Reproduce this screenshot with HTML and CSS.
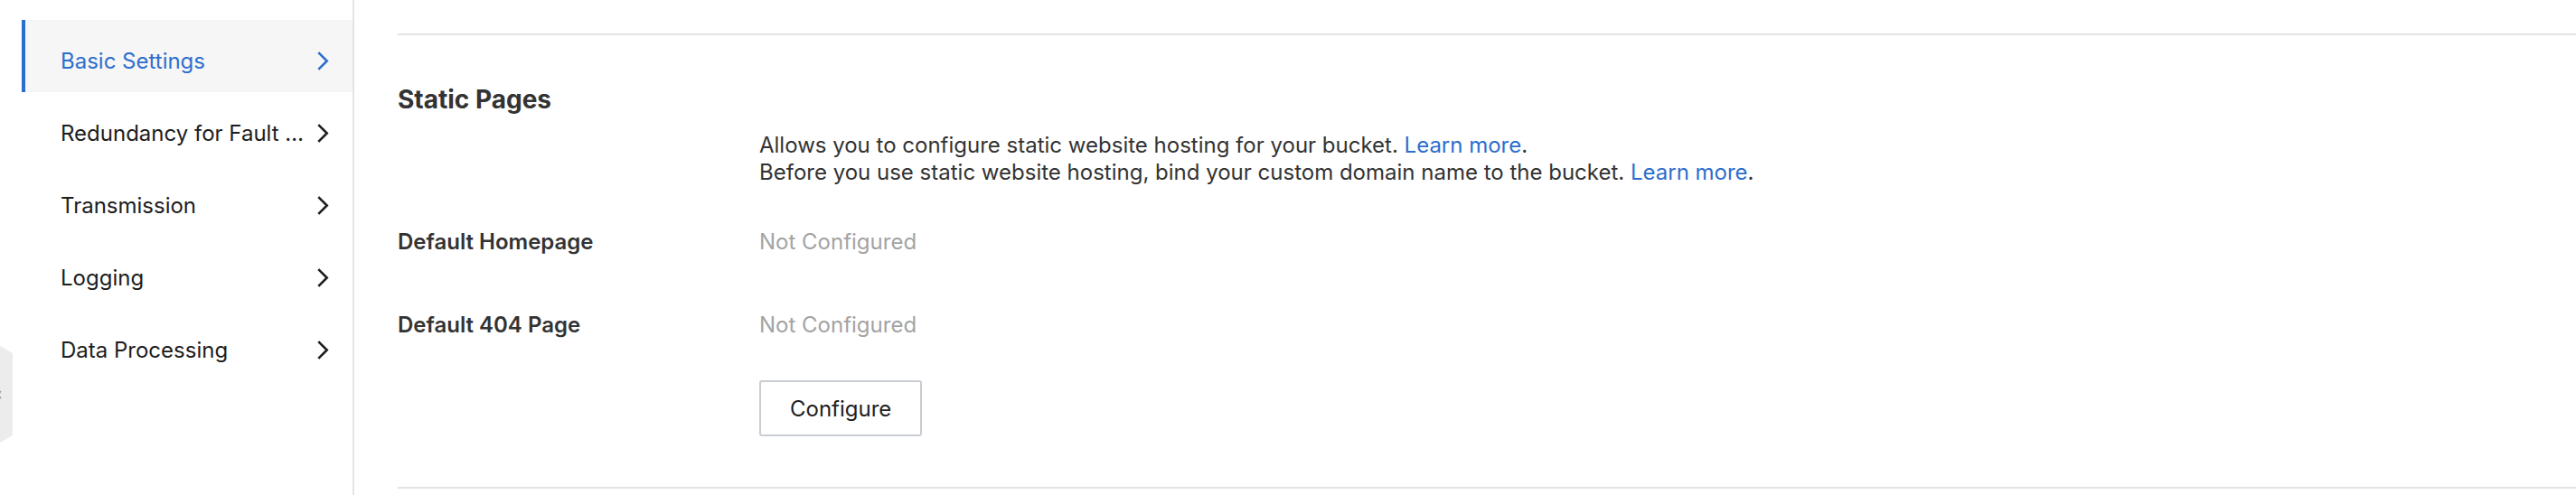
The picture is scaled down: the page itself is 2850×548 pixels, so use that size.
FILE: index.html
```html
<!DOCTYPE html>
<html lang="en">
<head>
    <meta charset="UTF-8">
    <meta name="viewport" content="width=device-width, initial-scale=1.0">
    <title>Static Pages</title>
    <link rel="stylesheet" href="styles.css">
</head>
<body>
    <div class="layout">
        <nav class="side-menu">
            <a class="menu-item active" href="#">
                <span class="menu-text">Basic Settings</span>
                <svg class="chevron" viewBox="0 0 13 22"><polyline points="2,2 11,11 2,20"/></svg>
            </a>
            <a class="menu-item" href="#">
                <span class="menu-text" title="Redundancy for Fault Tolerance">Redundancy for Fault Tolerance</span>
                <svg class="chevron" viewBox="0 0 13 22"><polyline points="2,2 11,11 2,20"/></svg>
            </a>
            <a class="menu-item" href="#">
                <span class="menu-text">Transmission</span>
                <svg class="chevron" viewBox="0 0 13 22"><polyline points="2,2 11,11 2,20"/></svg>
            </a>
            <a class="menu-item" href="#">
                <span class="menu-text">Logging</span>
                <svg class="chevron" viewBox="0 0 13 22"><polyline points="2,2 11,11 2,20"/></svg>
            </a>
            <a class="menu-item" href="#">
                <span class="menu-text">Data Processing</span>
                <svg class="chevron" viewBox="0 0 13 22"><polyline points="2,2 11,11 2,20"/></svg>
            </a>
        </nav>

        <main class="content">
            <section class="panel">
                <h2>Static Pages</h2>

                <div class="row desc-row">
                    <div class="row-label"></div>
                    <div class="row-value desc">
                        <p>Allows you to configure static website hosting for your bucket. <a href="#">Learn more</a>.</p>
                        <p>Before you use static website hosting, bind your custom domain name to the bucket. <a href="#">Learn more</a>.</p>
                    </div>
                </div>

                <div class="row field-row">
                    <div class="row-label">Default Homepage</div>
                    <div class="row-value muted">Not Configured</div>
                </div>

                <div class="row field-row">
                    <div class="row-label">Default 404 Page</div>
                    <div class="row-value muted">Not Configured</div>
                </div>

                <div class="row button-row">
                    <div class="row-label"></div>
                    <div class="row-value">
                        <button type="button" class="btn">Configure</button>
                    </div>
                </div>
            </section>
        </main>
    </div>

    <!-- ручка сворачивания меню -->
    <div class="collapse-handle">
        <svg viewBox="0 0 6 10"><polyline points="4,1 1,5 4,9"/></svg>
    </div>
</body>
</html>
```

FILE: styles.css
```css
body {
    margin: 0;
    font-family: Inter, "Liberation Sans", Arial, sans-serif;
    color: #333;
    background: #fff;
}

.layout {
    display: flex;
    min-height: 100vh;
}

/* Боковое меню */
.side-menu {
    width: 390px;
    flex-shrink: 0;
    padding-top: 22px;
    border-right: 2px solid #e4e4e4;
}

.menu-item {
    display: flex;
    align-items: center;
    gap: 4px;
    height: 80px;
    box-sizing: border-box;
    margin-left: 24px;
    padding: 10px 26px 0 39px;
    border-left: 4px solid transparent;
    font-size: 24px;
    color: #1d1d1d;
    text-decoration: none;
}

.menu-item.active {
    border-left-color: #2d6ecd;
    background-color: #f6f6f6;
    color: #2d6ecd;
}

.menu-text {
    flex: 1;
    min-width: 0;
    white-space: nowrap;
    overflow: hidden;
    text-overflow: ellipsis;
}

.chevron {
    width: 14px;
    height: 23px;
    flex-shrink: 0;
    margin-top: 1px;
    fill: none;
    stroke: currentColor;
    stroke-width: 2.5;
}

/* Основная часть */
.content {
    flex: 1;
    padding: 37px 0 0 48px;
}

.panel {
    border-top: 2px solid #e3e3e3;
    border-bottom: 2px solid #e3e3e3;
    padding: 53px 0 56px;
}

.panel h2 {
    margin: 0;
    font-size: 28px;
    line-height: 36px;
    font-weight: 700;
    color: #333;
}

.row {
    display: grid;
    grid-template-columns: 400px 1fr;
}

.row-label {
    font-weight: 600;
}

.desc-row {
    margin-top: 18px;
}

.desc p {
    margin: 0;
    font-size: 24px;
    line-height: 30px;
}

.desc a {
    color: #2d6ecd;
    text-decoration: none;
}

.field-row {
    font-size: 24px;
    line-height: 32px;
}

.desc-row + .field-row {
    margin-top: 46px;
}

.field-row + .field-row {
    margin-top: 60px;
}

.muted {
    color: #a3a3a3;
}

.button-row {
    margin-top: 45px;
}

.btn {
    height: 62px;
    padding: 0 32px;
    font-family: inherit;
    font-size: 24px;
    color: #222;
    background: #fff;
    border: 2px solid #c8ccd3;
    border-radius: 3px;
    cursor: pointer;
}

.collapse-handle {
    position: absolute;
    left: 0;
    top: 383px;
    width: 14px;
    height: 107px;
    background: #ececec;
    clip-path: polygon(0 0, 100% 8px, 100% calc(100% - 8px), 0 100%);
}

.collapse-handle svg {
    position: absolute;
    left: -3px;
    top: 49px;
    width: 6px;
    height: 10px;
    fill: none;
    stroke: #999;
    stroke-width: 1.5;
}
```
